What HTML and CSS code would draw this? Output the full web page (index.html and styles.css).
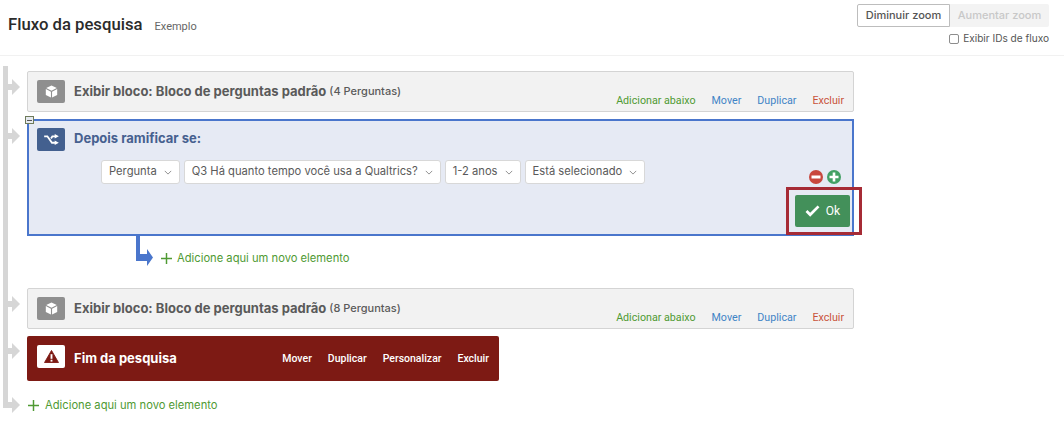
FILE: index.html
```html
<!DOCTYPE html>
<html lang="pt">
<head>
<meta charset="utf-8">
<title>Fluxo da pesquisa</title>
<link rel="stylesheet" href="styles.css">
</head>
<body>
<header class="top">
  <div class="heading">
    <h1 class="title">Fluxo da pesquisa</h1>
    <span class="subtitle">Exemplo</span>
  </div>
  <div class="tools">
    <div class="zoom">
      <button class="zoom-btn">Diminuir zoom</button>
      <button class="zoom-btn off">Aumentar zoom</button>
    </div>
    <label class="ids"><span class="check"></span>Exibir IDs de fluxo</label>
  </div>
</header>
<main class="flow">
  <div class="trunk"></div>

  <section class="block">
    <svg class="arrow" viewBox="0 0 17 16"><path d="M0 5h9V0l8 8-8 8v-5H0z"/></svg>
    <span class="badge"><svg class="cube" viewBox="0 0 16 16"><path d="M8 .5l6.500 3.300L8 7.100 1.500 3.800z"/><path d="M1 5l6.300 3.200v7.300L1 12.200zM15 5L8.700 8.200v7.300l6.300-3.300z"/></svg></span>
    <span class="name">Exibir bloco: Bloco de perguntas padrão</span>
    <span class="count">(4 Perguntas)</span>
    <nav class="actions">
      <a class="add">Adicionar abaixo</a><a class="link">Mover</a><a class="link">Duplicar</a><a class="del">Excluir</a>
    </nav>
  </section>

  <section class="branch">
    <svg class="arrow" viewBox="0 0 17 16"><path d="M0 5h9V0l8 8-8 8v-5H0z"/></svg>
    <span class="collapse"></span>
    <div class="branch-head">
      <span class="badge blue"><svg class="shuffle" viewBox="0 0 16 12"><path class="shuffle-line" d="M0 2.500h3.500l5 7H12M7.500 5l1.500-2.500h3"/><path class="shuffle-head" d="M11.500 0l4.500 2.500-4.500 2.500zM11.500 7l4.500 2.500-4.500 2.500z"/></svg></span>
      <span class="branch-title">Depois ramificar se:</span>
    </div>
    <div class="conds">
      <span class="sel">Pergunta<svg class="chev" viewBox="0 0 10 6"><path d="M1 1l4 4 4-4"/></svg></span>
      <span class="sel">Q3 Há quanto tempo você usa a Qualtrics?<svg class="chev" viewBox="0 0 10 6"><path d="M1 1l4 4 4-4"/></svg></span>
      <span class="sel">1-2 anos<svg class="chev" viewBox="0 0 10 6"><path d="M1 1l4 4 4-4"/></svg></span>
      <span class="sel">Está selecionado<svg class="chev" viewBox="0 0 10 6"><path d="M1 1l4 4 4-4"/></svg></span>
    </div>
    <div class="branch-foot">
      <div class="round">
        <svg class="dot" viewBox="0 0 14 14"><circle cx="7" cy="7" r="7" fill="#c8473d"/><rect x="2.500" y="5.500" width="9" height="3" fill="#fff"/></svg>
        <svg class="dot" viewBox="0 0 14 14"><circle cx="7" cy="7" r="7" fill="#43a064"/><path d="M5.700 2.500h2.600v3.200h3.200v2.600H8.300v3.200H5.700V8.300H2.500V5.700h3.200z" fill="#fff"/></svg>
      </div>
      <button class="ok"><svg class="tick" viewBox="0 0 16 13"><path d="M1.500 6.500l4 4L14.500 1.500"/></svg>Ok</button>
    </div>
    <div class="highlight"></div>
  </section>

  <div class="branch-add">
    <svg class="elbow" viewBox="0 0 17 30"><path d="M0 0h4v18h7v-5l6 8.500-6 8.500v-5H0z"/></svg>
    <svg class="plus" viewBox="0 0 12 12"><path d="M6 0v12M0 6h12"/></svg>
    <span class="add-text">Adicione aqui um novo elemento</span>
  </div>

  <section class="block">
    <svg class="arrow" viewBox="0 0 17 16"><path d="M0 5h9V0l8 8-8 8v-5H0z"/></svg>
    <span class="badge"><svg class="cube" viewBox="0 0 16 16"><path d="M8 .5l6.500 3.300L8 7.100 1.500 3.800z"/><path d="M1 5l6.300 3.200v7.300L1 12.200zM15 5L8.700 8.200v7.300l6.300-3.300z"/></svg></span>
    <span class="name">Exibir bloco: Bloco de perguntas padrão</span>
    <span class="count">(8 Perguntas)</span>
    <nav class="actions">
      <a class="add">Adicionar abaixo</a><a class="link">Mover</a><a class="link">Duplicar</a><a class="del">Excluir</a>
    </nav>
  </section>

  <section class="end">
    <svg class="arrow" viewBox="0 0 17 16"><path d="M0 5h9V0l8 8-8 8v-5H0z"/></svg>
    <span class="badge white"><svg class="warn" viewBox="0 0 16 14"><path d="M8 .5l7.500 13H.5z" stroke="#7d1a14" stroke-linejoin="round"/><rect class="warn-mark" x="7" y="4.500" width="2" height="5"/><rect class="warn-mark" x="7" y="10.500" width="2" height="2"/></svg></span>
    <span class="end-title">Fim da pesquisa</span>
    <nav class="end-actions"><a>Mover</a><a>Duplicar</a><a>Personalizar</a><a>Excluir</a></nav>
  </section>

  <div class="flow-add">
    <svg class="arrow" viewBox="0 0 17 16"><path d="M0 5h9V0l8 8-8 8v-5H0z"/></svg>
    <svg class="plus" viewBox="0 0 12 12"><path d="M6 0v12M0 6h12"/></svg>
    <span class="add-text">Adicione aqui um novo elemento</span>
  </div>
</main>
</body>
</html>
```
FILE: styles.css
```css
* { box-sizing: border-box; }
html, body { margin: 0; padding: 0; }
body {
  width: 1064px;
  height: 424px;
  overflow: hidden;
  background: #fff;
  font-family: Inter, "Liberation Sans", sans-serif;
  color: #525252;
}
.top {
  height: 56px;
  border-bottom: 1px solid #f1f1f1;
  display: flex;
  justify-content: space-between;
  padding: 4px 15px 0 8px;
}
.heading { display: flex; align-items: baseline; gap: 12px; padding-top: 11px; }
.title { margin: 0; font: 500 16.700px/20px Roboto, sans-serif; color: #2b2b2b; }
.subtitle { font: 400 11px/14px Roboto, sans-serif; color: #666; }
.tools { display: flex; flex-direction: column; align-items: flex-end; }
.zoom { display: flex; }
.zoom-btn {
  height: 23px;
  padding: 0;
  font: 500 11px/1 Inter, sans-serif;
  background: #fff;
  border: 1px solid #bdbdbd;
  border-radius: 2px 0 0 2px;
  color: #555;
  width: 93px;
}
.zoom-btn.off { background: #f3f3f3; border: 0; color: #c8c8c8; width: 99px; border-radius: 0 2px 2px 0; }
.ids { display: flex; align-items: center; margin-top: 6px; font: 400 10.100px/11px Inter, sans-serif; color: #555; }
.check { width: 10px; height: 10px; border: 1px solid #8d8d8d; border-radius: 2px; margin-right: 4px; }

.flow { position: relative; padding: 15px 0 0 27px; width: 854px; }
.trunk { position: absolute; left: 3px; top: 10px; width: 5px; height: 342px; background: #d6d6d6; }
.arrow { position: absolute; left: -25px; top: 7px; width: 17px; height: 16px; fill: #d6d6d6; }

.block {
  position: relative;
  height: 41px;
  padding-left: 9px;
  padding-bottom: 2px;
  display: flex;
  align-items: center;
  background: #f2f2f2;
  border: 1px solid #d4d4d4;
  border-radius: 2px;
}
.badge {
  width: 28px;
  height: 23px;
  flex: none;
  display: flex;
  align-items: center;
  justify-content: center;
  background: #8f8f8f;
  border-radius: 2px;
}
.block .badge { margin-top: 2px; }
.cube { width: 13px; height: 13px; fill: #fff; }
.name { margin-left: 9px; font: 700 13px/18px Inter, sans-serif; color: #5a5a5a; }
.count { margin-left: 3px; font: 500 11px/18px Inter, sans-serif; color: #5a5a5a; }
.actions {
  position: absolute;
  right: 9px;
  bottom: 3px;
  display: flex;
  gap: 16px;
  font: 400 10.700px/14px Roboto, sans-serif;
}
.add { color: #4f9a33; }
.link { color: #3f84c6; }
.del { color: #c9523b; }

.branch {
  position: relative;
  height: 117px;
  margin-top: 7px;
  padding: 7px 0 0 8px;
  background: #e6eaf4;
  border: 2px solid #4a76cc;
}
.branch .arrow { left: -26px; }
.collapse {
  position: absolute;
  left: -4px;
  top: -5px;
  width: 9px;
  height: 8px;
  background: #e6eaf0 linear-gradient(#555, #555) center/5px 1px no-repeat;
  border: 1px solid #6e7a5a;
}
.branch-head { display: flex; align-items: center; }
.badge.blue { background: #43608f; }
.shuffle { width: 15px; height: 11px; }
.shuffle-line { fill: none; stroke: #fff; stroke-width: 2; }
.shuffle-head { fill: #fff; }
.branch-title { margin: 0 0 3px 9px; font: 700 13px/18px Inter, sans-serif; color: #46608f; }
.conds { display: flex; gap: 4px; margin: 9px 0 0 64px; }
.sel {
  height: 24px;
  padding: 0 7px;
  display: flex;
  align-items: center;
  gap: 7px;
  background: #fff;
  border: 1px solid #d8d8d8;
  border-radius: 3px;
  font: 400 11.200px/1 Inter, sans-serif;
  color: #5a5a5a;
  white-space: nowrap;
}
.chev { width: 8px; height: 5px; fill: none; stroke: #777; stroke-width: 1; }
.branch-foot { position: absolute; right: 2px; bottom: 7px; display: flex; flex-direction: column; align-items: flex-end; }
.round { display: flex; gap: 4px; margin-right: 9px; margin-bottom: 11px; }
.dot { width: 14px; height: 14px; display: block; }
.ok {
  width: 55px;
  height: 32px;
  padding: 0;
  display: flex;
  align-items: center;
  justify-content: center;
  gap: 6px;
  background: #43905a;
  border: 0;
  border-radius: 2px;
  color: #fff;
  font: 400 12px/1 Roboto, sans-serif;
}
.tick { width: 15px; height: 12px; fill: none; stroke: #fff; stroke-width: 3; }
.highlight {
  position: absolute;
  right: -10px;
  bottom: -1px;
  width: 76px;
  height: 48px;
  border: 3px solid #a62b35;
}
.branch-add {
  position: relative;
  height: 52px;
  display: flex;
  align-items: flex-start;
  padding: 15px 0 0 134px;
}
.elbow { position: absolute; left: 109px; top: 0; width: 17px; height: 30px; fill: #4a76cc; }
.plus { width: 11px; height: 11px; margin-top: 2px; stroke: #4f9a33; stroke-width: 1.600; fill: none; flex: none; }
.add-text { margin-left: 5px; font: 400 11.200px/14px Inter, sans-serif; color: #4f9a33; }

.end {
  position: relative;
  width: 472px;
  height: 45px;
  margin-top: 7px;
  padding: 0 10px 0 10px;
  display: flex;
  align-items: center;
  background: #7d1a14;
  border-radius: 2px;
}
.end .arrow { left: -24px; }
.badge.white { background: #fff; margin-bottom: 4px; }
.warn { width: 15px; height: 13px; fill: #7d1a14; }
.warn-mark { fill: #fff; }
.end-title { margin: 0 0 1px 9px; font: 700 13px/18px Inter, sans-serif; color: #fff; }
.end-actions { margin-left: auto; display: flex; gap: 16px; font: 500 10.500px/14px Roboto, sans-serif; color: #fff; }
.flow-add { position: relative; height: 48px; display: flex; align-items: flex-start; padding: 17px 0 0 1px; }
.flow-add .arrow { left: -24px; top: 16px; }
.flow-add .add-text { margin-left: 6px; }
```
